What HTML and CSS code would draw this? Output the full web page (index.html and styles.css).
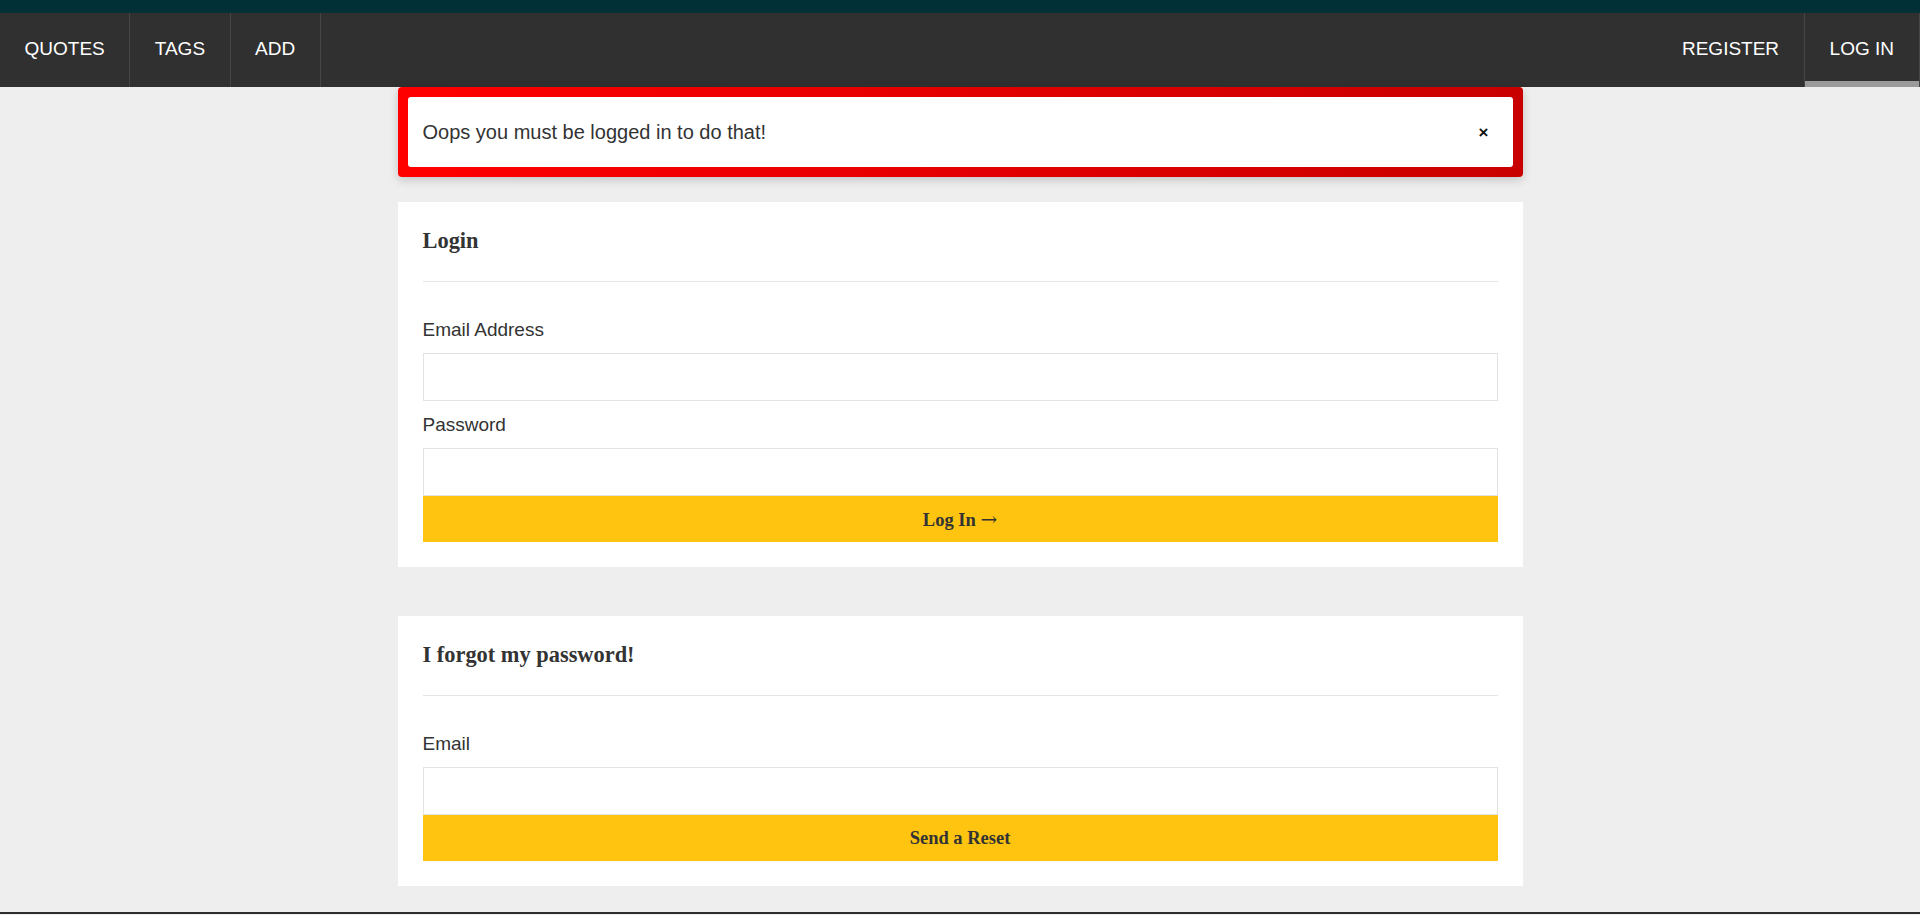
FILE: index.html
```html
<!DOCTYPE html>
<html lang="en">
<head>
<meta charset="utf-8">
<title>Login</title>
<link rel="stylesheet" href="styles.css">
</head>
<body>
<div class="topstrip"></div>
<nav class="nav">
  <ul class="nav-group">
    <li class="nav-item"><a class="nav-link" href="#">QUOTES</a></li>
    <li class="nav-item"><a class="nav-link" href="#">TAGS</a></li>
    <li class="nav-item"><a class="nav-link" href="#">ADD</a></li>
  </ul>
  <ul class="nav-group nav-group--right">
    <li class="nav-item nav-item--plain"><a class="nav-link" href="#">REGISTER</a></li>
    <li class="nav-item nav-item--active"><a class="nav-link" href="#">LOG IN</a></li>
  </ul>
</nav>
<main class="container">
  <div class="flash">
    <div class="flash-inner">
      <span class="flash-text">Oops you must be logged in to do that!</span>
      <button class="flash-close" type="button">×</button>
    </div>
  </div>

  <section class="card">
    <h2 class="card-title">Login</h2>
    <hr class="card-rule">
    <form class="form">
      <label class="field-label" for="email">Email Address</label>
      <input class="field-input" id="email" type="email">
      <label class="field-label field-label--next" for="password">Password</label>
      <input class="field-input" id="password" type="password">
      <button class="btn-submit" type="button">Log In <span class="btn-arrow">→</span></button>
    </form>
  </section>

  <section class="card card--second">
    <h2 class="card-title">I forgot my password!</h2>
    <hr class="card-rule">
    <form class="form">
      <label class="field-label" for="reset-email">Email</label>
      <input class="field-input" id="reset-email" type="email">
      <button class="btn-submit" type="button">Send a Reset</button>
    </form>
  </section>
</main>
<footer class="footer"></footer>
</body>
</html>
```
FILE: styles.css
```css
html {
  overflow: hidden;
}

body {
  margin: 0;
  background: #eeeeee;
  font-family: "Liberation Sans", Arial, sans-serif;
  color: #333333;
}

.topstrip {
  height: 13px;
  background: #013136;
}

.nav {
  display: flex;
  height: 74px;
  background: #303030;
}

.nav-group {
  display: flex;
  margin: 0;
  padding: 0;
  list-style: none;
}

.nav-group--right {
  margin-left: auto;
}

.nav-item {
  border-right: 1px solid #454545;
}

.nav-item--plain {
  border-right: none;
}

.nav-item--active {
  border-left: 1px solid #454545;
  box-shadow: inset 0 -6px 0 #9a9a9a;
}

.nav-link {
  display: block;
  height: 74px;
  padding: 0 24.5px;
  line-height: 71px;
  font-size: 19px;
  color: #ffffff;
  text-decoration: none;
}

.nav-item--active .nav-link {
  padding: 0 25px;
}

.container {
  width: 1125px;
  margin: 0 auto;
  padding-bottom: 26px;
}

.flash {
  padding: 10px;
  border-radius: 4px;
  background: linear-gradient(to right, #ff0000, #c90000);
  box-shadow: 0 3px 10px rgba(0, 0, 0, 0.18);
}

.flash-inner {
  display: flex;
  align-items: center;
  justify-content: space-between;
  height: 70px;
  padding: 0 15px;
  border-radius: 3px;
  background: #ffffff;
}

.flash-text {
  font-size: 20px;
  color: #333333;
}

.flash-close {
  padding: 0 9px;
  border: none;
  background: none;
  font-family: "Liberation Sans", Arial, sans-serif;
  font-size: 17px;
  font-weight: bold;
  color: #111111;
  line-height: 1;
}

.card {
  margin-top: 25px;
  padding: 26px 25px 25px;
  background: #ffffff;
}

.card--second {
  margin-top: 49px;
}

.card-title {
  margin: 0;
  font-family: "Liberation Serif", "Times New Roman", serif;
  font-size: 22.4px;
  line-height: 1.2;
  font-weight: bold;
  color: #333333;
}

.card-rule {
  margin: 26px 0 0;
  border: none;
  border-top: 1px solid #e5e5e5;
  height: 0;
}

.form {
  display: flex;
  flex-direction: column;
  padding-top: 34px;
}

.field-label {
  display: block;
  margin-bottom: 10px;
  font-size: 19px;
  line-height: 27px;
  color: #333333;
}

.field-label--next {
  margin-top: 10px;
}

.field-input {
  display: block;
  box-sizing: border-box;
  width: 100%;
  height: 48px;
  margin: 0;
  padding: 0 12px;
  border: 1px solid #e3e3e3;
  background: #ffffff;
  outline: none;
  font-size: 18px;
}

.btn-submit {
  display: block;
  width: 100%;
  height: 46px;
  margin: 0;
  padding: 2px 0 0;
  border: none;
  background: #fec410;
  font-family: "Liberation Serif", "Times New Roman", serif;
  font-size: 18.5px;
  font-weight: bold;
  color: #333333;
  cursor: pointer;
}

.btn-arrow {
  font-family: "DejaVu Serif", serif;
  font-weight: normal;
  font-size: 20px;
  line-height: 1;
}

.footer {
  height: 2px;
  background: #2d2d2d;
}
```
